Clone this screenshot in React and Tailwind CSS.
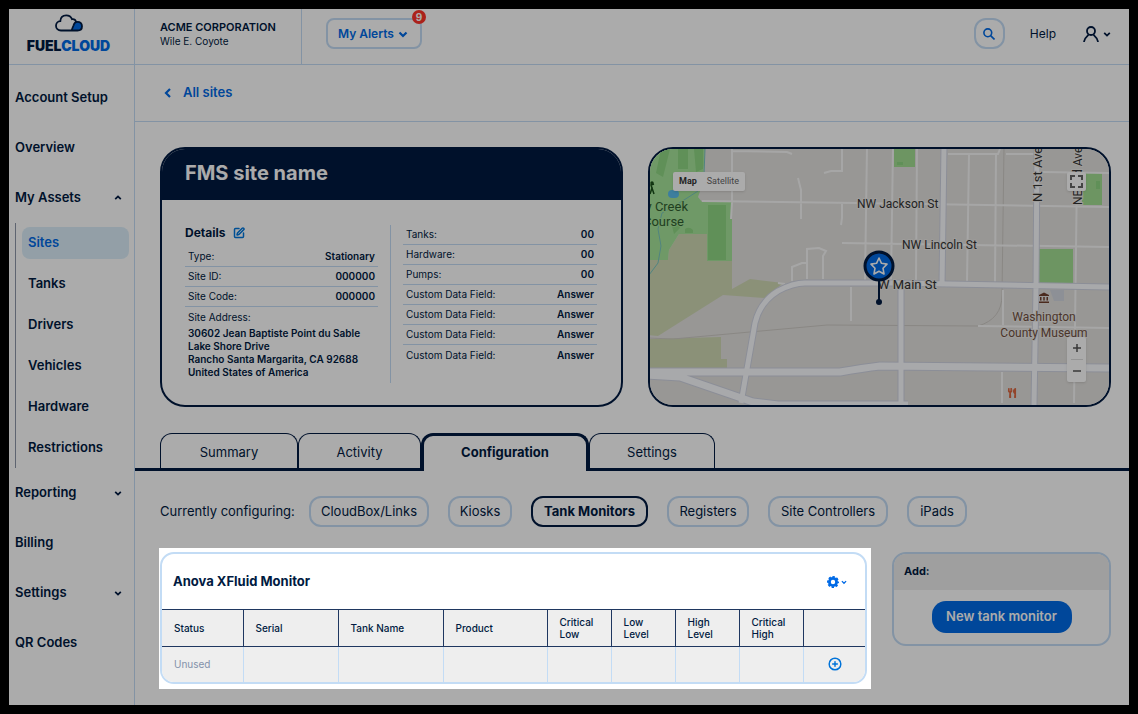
import React from "react";
import { FaUtensils } from "react-icons/fa";
import { LuCirclePlus, LuSquarePen } from "react-icons/lu";
import { MdAccountBalance } from "react-icons/md";

const assets = ["Sites", "Tanks", "Drivers", "Vehicles", "Hardware", "Restrictions"];

const siteRows = [
  { label: "Type:", value: "Stationary" },
  { label: "Site ID:", value: "000000" },
  { label: "Site Code:", value: "000000" },
];

const countRows = [
  { label: "Tanks:", value: "00" },
  { label: "Hardware:", value: "00" },
  { label: "Pumps:", value: "00" },
  { label: "Custom Data Field:", value: "Answer" },
  { label: "Custom Data Field:", value: "Answer" },
  { label: "Custom Data Field:", value: "Answer" },
  { label: "Custom Data Field:", value: "Answer" },
];

const tabs = [
  { name: "Summary", width: "w-[138px]" },
  { name: "Activity", width: "w-[123px]" },
  { name: "Configuration", width: "w-[168px]" },
  { name: "Settings", width: "w-[126px]" },
];

const devices = [
  { name: "CloudBox/Links", width: "w-[120px]" },
  { name: "Kiosks", width: "w-[64px]" },
  { name: "Tank Monitors", width: "w-[117px]" },
  { name: "Registers", width: "w-[82px]" },
  { name: "Site Controllers", width: "w-[120px]" },
  { name: "iPads", width: "w-[60px]" },
];

const columns = [
  { name: "Status", width: "w-[81px]" },
  { name: "Serial", width: "w-[95px]" },
  { name: "Tank Name", width: "w-[105px]" },
  { name: "Product", width: "w-[104px]" },
  { name: "Critical Low", width: "w-[64px]" },
  { name: "Low Level", width: "w-[64px]" },
  { name: "High Level", width: "w-[64px]" },
  { name: "Critical High", width: "w-[64px]" },
  { name: "", width: "w-[62px]" },
];

const chevrons = {
  down: "M1.500 3.500 5 7 8.500 3.500",
  up: "M1.500 6.500 5 3 8.500 6.500",
  left: "M7 1 3 5 7 9",
};

function Chevron({ dir = "down", className }) {
  return (
    <svg viewBox="0 0 10 10" className={className} fill="none" stroke="currentColor" strokeWidth="2.200" aria-hidden="true">
      <path d={chevrons[dir]} />
    </svg>
  );
}

function Logo() {
  return (
    <a
      href="#home"
      className="flex w-[126px] shrink-0 flex-col items-center border-r border-[#c3dcf5] pt-[5px] pr-1.5"
    >
      <svg viewBox="0 0 28 18" className="h-[18px] w-7" aria-hidden="true">
        <path d="M17 16.500 19 10.500Q20.500 7.500 23.500 7.800 27 8.700 27 12.300 26.500 16.500 22.500 16.500Z" fill="#006ae6" />
        <path
          d="M6 16.500H22.500C25.500 16.500 27 14.500 27 12.200 27 9.500 25 7.800 22.500 7.800 20 7.800 19 9.500 18.500 11.500L16.500 16.500M6 16.500C3 16.500 1 14.500 1 11.800 1 9.300 2.800 7.300 5.300 7.200 5.500 3.700 7.800 1.300 11.200 1.300 14 1.300 16 2.700 17 5.200 19 4.900 20.500 6 21 7.800"
          fill="none"
          stroke="#001a41"
          strokeWidth="1.800"
          strokeLinecap="round"
        />
      </svg>
      <span className="mt-1 text-[14px] leading-5 font-black text-[#001a41]">
        FUEL<span className="text-[#006ae6]">CLOUD</span>
      </span>
    </a>
  );
}

function Header() {
  return (
    <header className="flex h-14 border-b border-[#c3dcf5]">
      <Logo />
      <div className="w-[167px] shrink-0 border-r border-[#c3dcf5] pt-2.5 pl-[25px]">
        <p className="text-[11px] leading-4 font-semibold">ACME CORPORATION</p>
        <p className="text-[10px] leading-3">Wile E. Coyote</p>
      </div>
      <div className="flex flex-1 items-center pr-[18px] pb-1.5 pl-6">
        <button className="relative flex h-[31px] w-24 items-center justify-between rounded-lg border-2 border-[#c3dcf5] px-2.5 text-[12px] font-semibold text-[#006ae6]">
          My Alerts
          <Chevron className="mr-0.5 size-2.5" />
          <span className="absolute -top-2.5 -right-1.5 flex size-3.5 items-center justify-center rounded-full bg-[#ff3329] text-[10px] font-bold text-white">
            9
          </span>
        </button>
        <button
          aria-label="Search"
          className="ml-auto flex size-[31px] items-center justify-center rounded-xl border-2 border-[#c3dcf5] text-[#006ae6]"
        >
          <svg viewBox="0 0 12 12" className="size-3" fill="none" stroke="currentColor" strokeWidth="1.600">
            <circle cx="4.800" cy="4.800" r="3.900" />
            <path d="M7.600 7.600 11.500 11.500" />
          </svg>
        </button>
        <a href="#help" className="ml-[25px] text-[12px]">
          Help
        </a>
        <button aria-label="Account" className="ml-[27px] flex items-center gap-1">
          <svg viewBox="0 0 16 16" className="size-4" fill="none" stroke="currentColor" strokeWidth="1.800">
            <circle cx="8" cy="5" r="4" />
            <path d="M.9 16C1.500 12.500 3.500 10.500 5.600 8.600M15.100 16C14.500 12.500 12.500 10.500 10.400 8.600" />
          </svg>
          <Chevron className="size-2" />
        </button>
      </div>
    </header>
  );
}

function NavItem({ label, chevron }) {
  return (
    <a href="#nav" className="flex h-[50px] items-center justify-between pr-3 pl-1.5">
      {label}
      {chevron && <Chevron dir={chevron} className="size-2" />}
    </a>
  );
}

function Sidebar() {
  return (
    <nav className="w-[126px] shrink-0 border-r border-[#c3dcf5] pt-2 text-[13px] font-semibold">
      <NavItem label="Account Setup" />
      <NavItem label="Overview" />
      <NavItem label="My Assets" chevron="up" />
      <div className="ml-1.5 flex flex-col gap-[9px] border-l border-[#8c96a8] py-1 pr-[5px] pl-1.5">
        {assets.map((name) => (
          <a
            key={name}
            href="#assets"
            className={
              name === "Sites"
                ? "flex h-8 items-center rounded-lg bg-[#dbeefa] pl-1.5 text-[#006ae6]"
                : "flex h-8 items-center pl-1.5"
            }
          >
            {name}
          </a>
        ))}
      </div>
      <NavItem label="Reporting" chevron="down" />
      <NavItem label="Billing" />
      <NavItem label="Settings" chevron="down" />
      <NavItem label="QR Codes" />
    </nav>
  );
}

function DataRow({ label, value }) {
  return (
    <div className="flex h-5 items-center justify-between border-b border-[#c3dcf5] px-[3px]">
      <dt>{label}</dt>
      <dd className="font-semibold">{value}</dd>
    </div>
  );
}

function SiteCard() {
  return (
    <section className="overflow-hidden rounded-[25px] border-2 border-[#001a41]">
      <h1 className="h-[51px] bg-[#001a41] pt-2.5 pl-[23px] text-[20px] leading-7 font-bold text-white">
        FMS site name
      </h1>
      <div className="grid grid-cols-2 pt-[25px] pr-6 pb-5 pl-[23px] text-[10px]">
        <div className="border-r border-[#c3dcf5] pr-3 pb-1">
          <h2 className="flex h-[22px] items-start gap-2 text-[12px] leading-4 font-bold">
            Details
            <button aria-label="Edit details" className="pt-0.5 text-[#0077dd]">
              <LuSquarePen className="size-3" strokeWidth={3} />
            </button>
          </h2>
          <dl>
            {siteRows.map((row) => (
              <DataRow key={row.label} label={row.label} value={row.value} />
            ))}
            <dt className="px-[3px] leading-5">Site Address:</dt>
            <dd className="px-[3px] leading-[13px] font-semibold whitespace-nowrap">
              30602 Jean Baptiste Point du Sable
              <br />
              Lake Shore Drive
              <br />
              Rancho Santa Margarita, CA 92688
              <br />
              United States of America
            </dd>
          </dl>
        </div>
        <dl className="pl-3 [&>div:last-child]:border-b-0">
          {countRows.map((row, i) => (
            <DataRow key={i} label={row.label} value={row.value} />
          ))}
        </dl>
      </div>
    </section>
  );
}

function MapArt() {
  return (
    <svg
      viewBox="2 2 459 256"
      preserveAspectRatio="xMidYMid slice"
      className="absolute inset-0 h-full w-full"
      fill="none"
      fontFamily="Roboto, sans-serif"
      fontSize="12"
    >
      <rect width="463" height="260" fill="#e3e1de" />
      {/* parks and fields */}
      <path d="M0 113H20L21 103 31 87H59V114H84V142L102 132 135 136 117 151 75 148 10 189 0 188Z" fill="#cfd9b4" />
      <path d="M0 192 73 190V212H79V221H0Z" fill="#cfd9b4" />
      <path d="M0 0H57L55 36 50 50 54 55H84V114H59V87H31L21 103 20 113H0Z" fill="#a6e59a" />
      <path d="M60 58H78V113H60ZM13 2H22L15 30 8 26ZM30 2H40V22H30ZM46 2H55V22L48 25Z" fill="#8fd783" />
      <path d="M24 79 29 74 32 81 26 87ZM37 82Q41 79 45 83V86H37Z" fill="#8fd783" />
      <path d="M246 0H267V20H246ZM434 26H454V58H434ZM391 102H425V136H391Z" fill="#a3df93" />
      <path d="M249 15H255V18H249ZM448 34H452V42H448Z" fill="#8fd783" />
      <path d="M402 143H416V154H406Z" fill="#d3d7e0" />
      <path d="M57 2 56 28 50 44 36 53 14 66 10 82 13 99 10 116 1 128" stroke="#78c4c0" />
      <rect x="20" y="43" width="11" height="8" rx="4" fill="#5bbdec" />
      {/* rail */}
      <path d="M0 191 25 192 179 178 330 179Q354 172 354 148L356 0" stroke="#cdcac5" />
      {/* side streets */}
      <path
        d="M84 0V55L83 72M84 4 139 5 144 7M194 0V24H183L176 26M150 31 153 43V72M54 54 209 56 462 60M194 56V71L193 78M219 0 217 133M194 96 462 100M144 134V120L154 116H159M159 132V102L171 101 178 104 175 109V132M130 136 137 137M203 140V174M245 0 243 133M269 0 268 133M300 7H350L352 2M358 7H386M321 7 319 135M348 7 347 135M395 25 462 26M429 26 426 256M355 143V178M354 225V256M330 179 462 181"
        stroke="#f8f8f8"
        strokeWidth="2"
      />
      {/* main roads: edge, then surface */}
      <g stroke="#d0d4e2" strokeWidth="7">
        <path d="M93 256 107 176Q112 155 130 144 145 136 157 136H245L462 140M296 0 294 138M389 0 388 140 386 258M253 138V258" />
        <path d="M0 225H192Q215 221 232 219L462 221M0 228 32 230 105 255 130 258H260" strokeWidth="9" />
      </g>
      <g stroke="#fbfcff" strokeWidth="5">
        <path d="M93 256 107 176Q112 155 130 144 145 136 157 136H245L462 140M296 0 294 138M389 0 388 140 386 258M253 138V258" />
        <path d="M0 225H192Q215 221 232 219L462 221M0 228 32 230 105 255 130 258H260" strokeWidth="7" />
      </g>
      {/* labels */}
      <g fill="#333333" stroke="#eceae7" strokeWidth="2" paintOrder="stroke">
        <text x="209" y="61">NW Jackson St</text>
        <text x="254" y="102">NW Lincoln St</text>
        <text x="230" y="142" fontSize="13">W Main St</text>
        <text transform="translate(394 55) rotate(-90)" fontSize="13">N 1st Ave</text>
        <text transform="translate(434 58) rotate(-90)">NE 3rd Ave</text>
        <g fill="#315f31" stroke="#a6e59a" textAnchor="end" fontSize="13">
          <text x="40" y="64">y Creek</text>
          <text x="36" y="79">Course</text>
        </g>
        <g fill="#70503f" textAnchor="middle">
          <text x="396" y="174">Washington</text>
          <text x="396" y="190">County Museum</text>
        </g>
      </g>
      <g stroke="#174d18" strokeWidth="1.500">
        <path d="M2 47 4 41 3 38 6 37M4 41 6 47" />
        <circle cx="4" cy="36" r="1" />
      </g>
      <MdAccountBalance x="390" y="145" size="12" color="#70402d" />
      <FaUtensils x="359" y="241" size="10" color="#dc6740" />
      {/* site pin */}
      <path d="M231 130V155" stroke="#001a41" strokeWidth="2" />
      <circle cx="231" cy="155" r="3" fill="#001a41" />
      <circle cx="231" cy="119" r="14" fill="#006ae6" stroke="#001a41" strokeWidth="3" />
      <path
        d="M231 111 233.500 116.300 239 117.100 235 121.200 236 127 231 124.200 226 127 227 121.200 223 117.100 228.500 116.300Z"
        stroke="#ffffff"
        strokeWidth="1.600"
        strokeLinejoin="round"
      />
    </svg>
  );
}

function SiteMap() {
  return (
    <section className="relative min-h-[260px] overflow-hidden rounded-[25px] border-2 border-[#001a41]">
      <MapArt />
      <div className="absolute top-[23px] left-[23px] flex h-[19px] items-center gap-2.5 rounded-xs bg-white px-1.5 font-[Roboto,sans-serif] text-[9px] shadow">
        <button className="font-bold text-[#333333]">Map</button>
        <button className="text-[#666666]">Satellite</button>
      </div>
      <button
        aria-label="Full screen"
        className="absolute top-[23px] right-[23px] flex size-[19px] items-center justify-center rounded-xs bg-white text-[#666666] shadow"
      >
        <svg viewBox="0 0 13 13" className="size-[13px]" fill="none" stroke="currentColor" strokeWidth="2">
          <path d="M1 5V1H5M8 1H12V5M12 8V12H8M5 12H1V8" />
        </svg>
      </button>
      <div className="absolute right-[23px] bottom-[23px] flex w-[19px] flex-col items-center rounded-xs bg-white text-[#555555] shadow">
        <button aria-label="Zoom in" className="flex h-[22px] items-center">
          <svg viewBox="0 0 8 8" className="size-2" stroke="currentColor" strokeWidth="1.500">
            <path d="M0 4H8M4 0V8" />
          </svg>
        </button>
        <span className="h-px w-3 bg-[#dddddd]" />
        <button aria-label="Zoom out" className="flex h-[22px] items-center">
          <svg viewBox="0 0 8 8" className="size-2" stroke="currentColor" strokeWidth="1.500">
            <path d="M0 4H8" />
          </svg>
        </button>
      </div>
    </section>
  );
}

function Tabs() {
  return (
    <div className="mt-[26px] flex h-[38px] items-start border-b-3 border-[#001a41] pl-[25px] text-[13px]">
      {tabs.map((tab) => (
        <button
          key={tab.name}
          className={
            tab.name === "Configuration"
              ? `${tab.width} h-[38px] rounded-t-xl border-3 border-b-0 border-[#001a41] bg-white pb-0.5 font-bold`
              : `${tab.width} h-[35px] rounded-t-xl border border-b-0 border-[#001a41] pt-1`
          }
        >
          {tab.name}
        </button>
      ))}
    </div>
  );
}

function DevicePicker() {
  return (
    <div className="mt-[25px] flex items-center pl-[25px] text-[13px]">
      <span className="w-[149px] shrink-0 whitespace-nowrap">Currently configuring:</span>
      <div className="flex gap-[19px]">
        {devices.map((device) => (
          <button
            key={device.name}
            className={
              device.name === "Tank Monitors"
                ? `${device.width} h-[31px] rounded-xl border-2 border-[#001a41] font-bold whitespace-nowrap`
                : `${device.width} h-[31px] rounded-xl border-2 border-[#c3dcf5] whitespace-nowrap`
            }
          >
            {device.name}
          </button>
        ))}
      </div>
    </div>
  );
}

function MonitorTable() {
  return (
    <section className="overflow-hidden rounded-[14px] border-2 border-[#c3dcf5] bg-white">
      <div className="flex h-[55px] items-center justify-between pr-[18px] pl-[11px]">
        <h2 className="text-[13px] font-bold">Anova XFluid Monitor</h2>
        <button aria-label="Monitor options" className="flex items-center gap-0.5 text-[#006ae6]">
          <svg viewBox="0 0 12 12" className="size-3" fill="none" stroke="currentColor">
            <circle cx="6" cy="6" r="3.600" strokeWidth="2.800" />
            <circle cx="6" cy="6" r="5.200" strokeWidth="1.600" strokeDasharray="2.400 1.684" strokeDashoffset="1.200" />
          </svg>
          <Chevron className="size-1.5" />
        </button>
      </div>
      <table className="w-full table-fixed border-collapse bg-[#eeeeee] text-[10px]">
        <thead>
          <tr className="h-[37px] border-y border-[#1f3760]">
            {columns.map((col) => (
              <th
                key={col.name}
                className={`${col.width} border-r border-[#1f3760] pr-1 pl-3 text-left leading-3 font-medium last:border-r-0`}
              >
                {col.name}
              </th>
            ))}
          </tr>
        </thead>
        <tbody>
          <tr className="h-[35px]">
            {columns.map((col, i) => (
              <td key={col.name} className="border-r border-[#c3dcf5] pl-3 text-[#8391aa] last:border-r-0">
                {i === 0 && "Unused"}
                {i === columns.length - 1 && (
                  <button aria-label="Add tank" className="ml-3 block text-[#0073d9]">
                    <LuCirclePlus className="size-3.5" strokeWidth={2.5} />
                  </button>
                )}
              </td>
            ))}
          </tr>
        </tbody>
      </table>
    </section>
  );
}

function AddCard() {
  return (
    <aside className="mt-1 w-[219px] shrink-0 self-start overflow-hidden rounded-[14px] border-2 border-[#c3dcf5]">
      <h2 className="h-9 bg-[#eeeeee] pl-2.5 text-[11px] leading-[34px] font-bold">Add:</h2>
      <div className="flex h-[54px] items-center justify-center">
        <button className="h-8 w-[140px] rounded-[14px] bg-[#006ae6] text-[13px] font-semibold whitespace-nowrap text-white">
          New tank monitor
        </button>
      </div>
    </aside>
  );
}

export default function App() {
  return (
    <div className="flex min-h-screen flex-col overflow-hidden bg-black p-[9px] font-[Inter,sans-serif] text-[#001a41]">
      <div className="flex flex-1 flex-col bg-white">
        <Header />
        <div className="flex flex-1">
          <Sidebar />
          <main className="min-w-0 flex-1 pb-4">
            <div className="flex h-[57px] items-center border-b border-[#c3dcf5] pl-7">
              <a href="#sites" className="flex items-center gap-2.5 text-[13px] font-semibold text-[#006ae6]">
                <Chevron dir="left" className="size-2.5" />
                All sites
              </a>
            </div>
            <div className="mt-[25px] grid grid-cols-2 gap-[25px] pr-[18px] pl-[25px]">
              <SiteCard />
              <SiteMap />
            </div>
            <Tabs />
            <DevicePicker />
            <div className="mt-[21px] flex gap-[21px] pr-[18px] pl-6">
              {/* spotlight: everything outside this box is dimmed by its shadow */}
              <div className="relative z-10 min-w-0 flex-1 bg-white pt-1 pr-1 pb-[5px] pl-px shadow-[0_0_0_9999px_rgba(0,0,0,0.33)]">
                <MonitorTable />
              </div>
              <AddCard />
            </div>
          </main>
        </div>
      </div>
    </div>
  );
}
